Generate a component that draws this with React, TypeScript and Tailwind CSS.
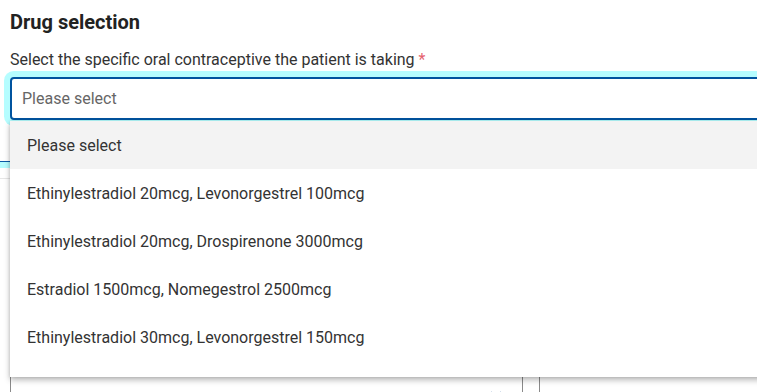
import React from 'react';

const options = [
  'Please select',
  'Ethinylestradiol 20mcg, Levonorgestrel 100mcg',
  'Ethinylestradiol 20mcg, Drospirenone 3000mcg',
  'Estradiol 1500mcg, Nomegestrol 2500mcg',
  'Ethinylestradiol 30mcg, Levonorgestrel 150mcg',
];

const App: React.FC = () => {
  return (
    <div className="relative w-[757px] h-[392px] overflow-hidden bg-white font-['Roboto','Liberation_Sans',sans-serif] text-[#333]">
      <div className="w-[1000px] pl-[10px] pt-[10px]">
        {/* Heading */}
        <h2 className="text-[20px] leading-[24px] font-bold text-[#222]">Drug selection</h2>

        <label className="block mt-[16px] text-[16px] leading-[20px] text-[#333]">
          Select the specific oral contraceptive the patient is taking{' '}
          <span className="text-[#e5626f]">*</span>
        </label>

        {/* Select with open listbox */}
        <div className="relative mt-[7px] z-10">
          <div className="h-[43px] flex items-center pl-[10px] border-2 border-[#00539f] rounded-[4px] bg-white shadow-[0_0_0_6px_#b5fdff]">
            <span className="text-[16px] text-[#666]">Please select</span>
          </div>

          <ul className="absolute left-0 right-0 top-[44px] bg-white pb-[16px] shadow-[0_3px_6px_rgba(0,0,0,0.28),0_0_3px_rgba(0,0,0,0.12)]">
            {options.map((opt, idx) => (
              <li
                key={idx}
                className={`h-[48px] flex items-center pl-[17px] pt-[2px] text-[16px] text-[#333] ${idx === 0 ? 'bg-[#f3f3f3]' : ''}`}
              >
                {opt}
              </li>
            ))}
          </ul>
        </div>

        {/* Content underneath the open list */}
        <div className="-ml-[10px] mt-[41px] border-t border-[#0a5aa6]">
          <div className="h-[6px] bg-[#b5fdff]"></div>
          <div className="mt-[10px] border-t border-[#e6e6e6]"></div>
        </div>

        <div className="mt-[160px] flex gap-[16px]">
          <div className="relative w-[513px] h-[60px] border border-[#8a8a8a] rounded-[3px]">
            <svg className="absolute left-[479px] top-[51px]" width="12" height="8" viewBox="0 0 12 8" fill="none">
              <path d="M1 1l5 5 5-5" stroke="#6f93bf" strokeWidth="1.6" />
            </svg>
          </div>
          <div className="w-[400px] h-[60px] border border-[#8a8a8a] rounded-[3px]"></div>
        </div>
      </div>
    </div>
  );
};

export default App;
